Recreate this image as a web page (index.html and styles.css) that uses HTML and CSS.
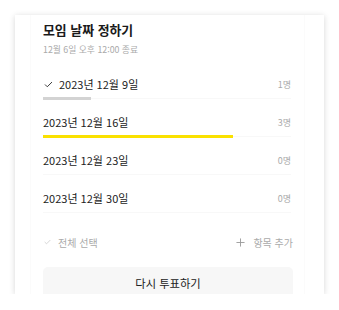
FILE: index.html
```html
<!DOCTYPE html>
<html lang="ko">
<head>
<meta charset="utf-8">
<link rel="stylesheet" href="styles.css">
</head>
<body>
<div class="page">
  <div class="card">
    <div class="inner">
      <h1 class="title">모임 날짜 정하기</h1>
      <p class="sub">12월 6일 오후 12:00 종료</p>
      <ul class="options">
        <li class="opt">
          <div class="line">
            <span class="label"><svg class="chk" viewBox="0 0 10 8" width="9" height="7"><polyline points="1,4 3.6,6.6 9,1.2" fill="none" stroke="#333" stroke-width="1.1"/></svg>2023년 12월 9일</span>
            <span class="count">1명</span>
          </div>
          <div class="track"><div class="fill gray" style="width:19.5%"></div></div>
        </li>
        <li class="opt">
          <div class="line">
            <span class="label">2023년 12월 16일</span>
            <span class="count">3명</span>
          </div>
          <div class="track"><div class="fill yellow" style="width:76.5%"></div></div>
        </li>
        <li class="opt">
          <div class="line">
            <span class="label">2023년 12월 23일</span>
            <span class="count">0명</span>
          </div>
          <div class="track"><div class="fill" style="width:0"></div></div>
        </li>
        <li class="opt">
          <div class="line">
            <span class="label">2023년 12월 30일</span>
            <span class="count">0명</span>
          </div>
          <div class="track"><div class="fill" style="width:0"></div></div>
        </li>
      </ul>
      <div class="footer">
        <span class="act"><svg class="chk-s" viewBox="0 0 10 8" width="7" height="6"><polyline points="1,4 3.6,6.6 9,1.2" fill="none" stroke="#c4c4c4" stroke-width="1"/></svg>전체 선택</span>
        <span class="act"><svg class="plus" viewBox="0 0 10 10" width="9" height="9"><path d="M5 0.5V9.5M0.5 5H9.5" stroke="#999" stroke-width="1" fill="none"/></svg>항목 추가</span>
      </div>
      <button class="btn">다시 투표하기</button>
    </div>
  </div>
</div>
</body>
</html>
```
FILE: styles.css
```css
* { box-sizing: border-box; margin: 0; padding: 0; }
html, body { background: #fff; }
body {
  font-family: "Noto Sans CJK KR", "Noto Sans", sans-serif;
  color: #222;
}
.page { padding: 15px 15px 0 15px; }
.card {
  width: 309px;
  height: 279px;
  background: #fff;
  box-shadow: 0 1px 6px rgba(0,0,0,0.16);
  overflow: hidden;
}
.inner {
  margin: 0 19px 0 15px;
  height: 100%;
  border-left: 1px solid #fbfbfb;
  border-right: 1px solid #fbfbfb;
  padding: 6px 11px 0 12px;
}
.title {
  font-size: 12.9px;
  font-weight: 700;
  line-height: 18px;
  color: #1a1a1a;
}
.sub {
  margin-top: 5px;
  font-size: 8.8px;
  line-height: 12px;
  color: #aaa;
}
.options { list-style: none; margin-top: 6px; }
.opt { padding-top: 14px; }
.line {
  display: flex;
  justify-content: space-between;
  align-items: center;
  height: 16px;
  padding-right: 2px;
}
.label {
  font-size: 11px;
  color: #222;
  display: flex;
  align-items: center;
}
.chk { margin: 0 6px 0 1px; }
.count { font-size: 9px; color: #aaa; }
.track {
  margin-top: 5px;
  height: 3px;
  background: linear-gradient(to bottom, transparent 1px, #f8f8f8 1px, #f8f8f8 2px, transparent 2px);
  margin-right: 2px;
}
.fill { height: 100%; }
.fill.gray { background: #d3d3d3; }
.fill.yellow { background: #fae100; }
.footer {
  margin-top: 20px;
  height: 16px;
  display: flex;
  justify-content: space-between;
  align-items: center;
}
.act {
  display: flex;
  align-items: center;
  font-size: 10px;
  color: #aaa;
}
.chk-s { margin: 0 7px 0 1px; }
.plus { margin-right: 8px; }
.btn {
  display: block;
  width: 100%;
  margin-top: 17px;
  height: 34px;
  border: none;
  border-radius: 5px;
  background: #f7f7f7;
  font-family: "Noto Sans CJK KR", "Noto Sans", sans-serif;
  font-size: 11.3px;
  color: #222;
  padding-bottom: 2px;
}
```
